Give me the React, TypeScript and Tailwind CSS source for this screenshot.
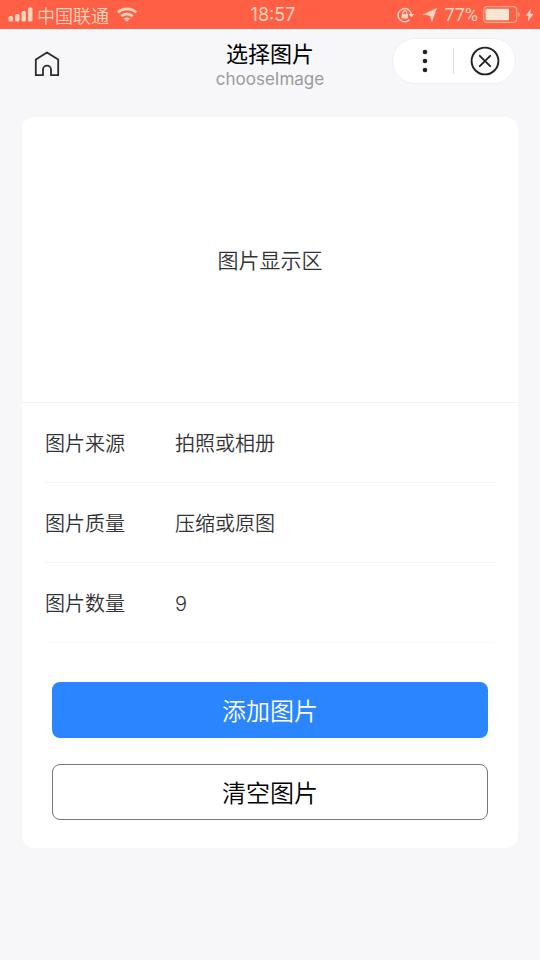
import { useState } from "react";

type Option = {
  key: string;
  label: string;
  choices: string[];
};

const OPTIONS: Option[] = [
  { key: "source", label: "图片来源", choices: ["拍照或相册", "拍照", "相册"] },
  { key: "quality", label: "图片质量", choices: ["压缩或原图", "压缩", "原图"] },
  { key: "count", label: "图片数量", choices: ["9", "8", "7", "6", "5", "4", "3", "2", "1"] },
];

function SignalIcon() {
  return (
    <svg viewBox="0 0 25 15" className="h-[15px] w-[25px]" fill="currentColor" aria-hidden="true">
      <rect x=".5" y="9" width="4.5" height="5.5" rx="1.6" />
      <rect x="7" y="7" width="4.5" height="7.5" rx="1.6" />
      <rect x="13.5" y="4" width="4.5" height="10.5" rx="1.6" />
      <rect x="20" y=".5" width="4.5" height="14" rx="1.6" />
    </svg>
  );
}

function WifiIcon() {
  return (
    <svg viewBox="0 0 20 15" className="h-[15px] w-5" fill="none" stroke="currentColor" strokeWidth="2.8" aria-hidden="true">
      <path d="M1 5.4C6 .6 14 .6 19 5.4" />
      <path d="M4.4 9.2C7.6 6.2 12.4 6.2 15.6 9.2" />
      <path d="M10 14.8 6.8 11.6C8.6 10 11.4 10 13.2 11.6Z" fill="currentColor" stroke="none" />
    </svg>
  );
}

function RotationLockIcon() {
  return (
    <svg viewBox="0 0 18 16" className="h-4 w-[18px]" fill="none" stroke="currentColor" strokeWidth="1.5" aria-hidden="true">
      <path d="M12.4 12.8A6.6 6.6 0 1 1 14.3 7.6" />
      <path d="M11.4 7h5.8l-2.8 3.4Z" fill="currentColor" stroke="none" />
      <rect x="4.6" y="7" width="6.4" height="4.6" rx=".6" fill="currentColor" stroke="none" />
      <path d="M5.9 7.4V5.8a1.9 1.9 0 0 1 3.8 0v1.6" strokeWidth="1.2" />
    </svg>
  );
}

function LocationIcon() {
  return (
    <svg viewBox="0 0 14 14" className="h-[14px] w-[14px]" fill="currentColor" aria-hidden="true">
      <path d="M13.8.2 8.8 13.8 7 7.6.2 6.4Z" stroke="currentColor" strokeWidth=".4" />
    </svg>
  );
}

function BatteryIcon() {
  return (
    <svg viewBox="0 0 38 17" className="h-[17px] w-[38px]" fill="none" aria-hidden="true">
      <rect x=".7" y=".7" width="33" height="15.6" rx="3.4" stroke="currentColor" strokeOpacity=".6" strokeWidth="1.2" />
      <rect x="2.6" y="2.8" width="23.4" height="11.4" rx="1.2" fill="#f5e6cf" />
      <path d="M35.4 6c1.8.6 1.8 4.4 0 5Z" fill="currentColor" fillOpacity=".7" />
    </svg>
  );
}

function BoltIcon() {
  return (
    <svg viewBox="0 0 9 14" className="h-[14px] w-[9px]" fill="currentColor" aria-hidden="true">
      <path d="M6 .8.6 7.8h3L2.8 13.4 8.6 5.8H5.2Z" />
    </svg>
  );
}

function StatusBar() {
  return (
    <div className="grid h-[29px] grid-cols-[1fr_auto_1fr] items-center bg-[#ff5f45] pr-[6px] pl-2 text-lg leading-6 text-[#ffd3bc]">
      <div className="flex items-center">
        <SignalIcon />
        <span className="ml-1 font-[350]">中国联通</span>
        <span className="ml-2">
          <WifiIcon />
        </span>
      </div>
      <time className="pl-1 font-[Inter,sans-serif]">18:57</time>
      <div className="flex items-center justify-end">
        <RotationLockIcon />
        <span className="ml-2">
          <LocationIcon />
        </span>
        <span className="ml-2 font-[Roboto,sans-serif]">77%</span>
        <span className="ml-[5px]">
          <BatteryIcon />
        </span>
        <span className="ml-1">
          <BoltIcon />
        </span>
      </div>
    </div>
  );
}

function NavBar() {
  return (
    <header className="grid h-[88px] grid-cols-[1fr_auto_1fr] items-start px-6">
      <button type="button" aria-label="首页" className="mt-[22px] ml-[10px] w-[26px] text-[#2b2b30]">
        <svg viewBox="0 0 26 26" className="h-[26px] w-[26px]" fill="none" stroke="currentColor" strokeWidth="1.8" strokeLinejoin="round">
          <path d="M1.8 8.6 13 1.4 24.2 8.6V24.2H17V18.6a4 4 0 0 0-8 0V24.2H1.8Z" />
        </svg>
      </button>
      <div className="pt-2 text-center">
        <h1 className="text-[22px] leading-[30px] text-black">选择图片</h1>
        <p className="font-[Inter,sans-serif] text-[17px] leading-6 text-[#9b9a9e]">chooseImage</p>
      </div>
      <div className="mt-[9px] flex h-[46px] w-[124px] items-center justify-self-end rounded-full border border-[#f0eff3] bg-white text-[#222]">
        <button type="button" aria-label="更多" className="flex h-full w-[60px] items-center justify-center pl-1">
          <svg viewBox="0 0 6 24" className="h-6 w-[6px]" fill="currentColor">
            <circle cx="3" cy="3" r="2.3" />
            <circle cx="3" cy="12" r="2.3" />
            <circle cx="3" cy="21" r="2.3" />
          </svg>
        </button>
        <span className="h-[26px] w-px bg-[#dcdce0]" />
        <button type="button" aria-label="关闭" className="flex h-full flex-1 items-center justify-center">
          <svg viewBox="0 0 30 30" className="h-[30px] w-[30px]" fill="none" stroke="currentColor" strokeWidth="1.9" strokeLinecap="round">
            <circle cx="15" cy="15" r="13.4" />
            <path d="M9.8 9.8 20.2 20.2M20.2 9.8 9.8 20.2" />
          </svg>
        </button>
      </div>
    </header>
  );
}

export default function App() {
  const [values, setValues] = useState<Record<string, string>>({
    source: "拍照或相册",
    quality: "压缩或原图",
    count: "9",
  });

  return (
    <div className="min-h-screen bg-[#f7f6f9] font-['Noto_Sans_CJK_SC',sans-serif]">
      <StatusBar />
      <NavBar />

      <main className="mx-[22px] rounded-xl bg-white pb-7 font-[350]">
        <div className="flex h-[286px] items-center justify-center border-b border-[#f0f0f3] text-[21px] text-[#333337]">
          图片显示区
        </div>

        <div className="px-[23px]">
          {OPTIONS.map((option) => (
            <div key={option.key} className="flex h-20 items-center border-b border-[#f4f4f6] text-xl text-[#333337] last:border-[#fafafb]">
              <label htmlFor={option.key} className="w-[130px]">
                {option.label}
              </label>
              <select
                id={option.key}
                value={values[option.key]}
                onChange={(e) => setValues({ ...values, [option.key]: e.target.value })}
                className="flex-1 appearance-none bg-transparent pt-[2px] font-['Inter','Noto_Sans_CJK_SC',sans-serif] outline-none"
              >
                {option.choices.map((choice) => (
                  <option key={choice}>{choice}</option>
                ))}
              </select>
            </div>
          ))}
        </div>

        <div className="mt-[39px] flex flex-col gap-[26px] px-[30px]">
          <button type="button" className="h-14 rounded-lg bg-[#2b85ff] text-2xl text-white">
            添加图片
          </button>
          <button type="button" className="h-14 rounded-lg border border-[#77777a] bg-white text-2xl text-black">
            清空图片
          </button>
        </div>
      </main>
    </div>
  );
}
